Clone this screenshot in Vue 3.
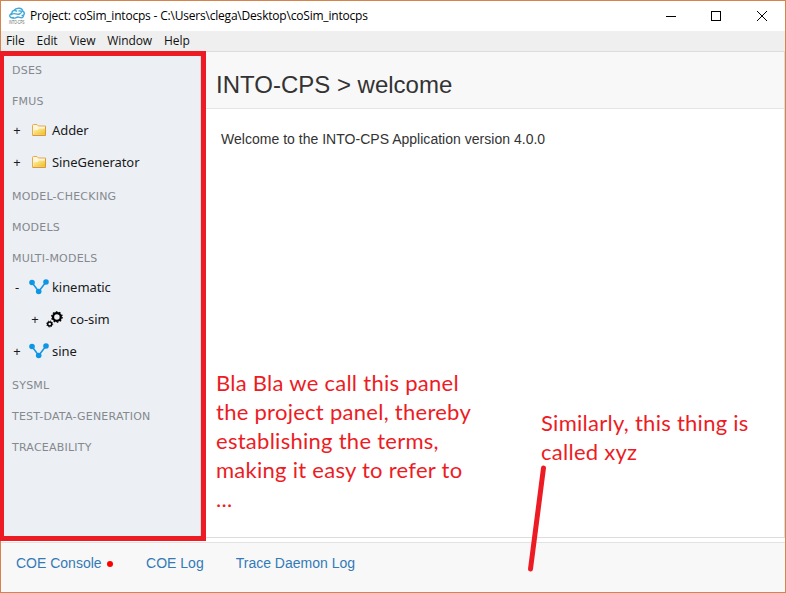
<script setup>
const menus = ['File', 'Edit', 'View', 'Window', 'Help']
const rows = [
  { label: 'DSES', kind: 'heading' },
  { label: 'FMUS', kind: 'heading' },
  { label: 'Adder', kind: 'item', icon: 'folder', sign: '+' },
  { label: 'SineGenerator', kind: 'item', icon: 'folder', sign: '+' },
  { label: 'MODEL-CHECKING', kind: 'heading' },
  { label: 'MODELS', kind: 'heading' },
  { label: 'MULTI-MODELS', kind: 'heading' },
  { label: 'kinematic', kind: 'item', icon: 'graph', sign: '-' },
  { label: 'co-sim', kind: 'item', icon: 'gears', sign: '+', nested: true },
  { label: 'sine', kind: 'item', icon: 'graph', sign: '+' },
  { label: 'SYSML', kind: 'heading' },
  { label: 'TEST-DATA-GENERATION', kind: 'heading' },
  { label: 'TRACEABILITY', kind: 'heading' },
]
</script>

<template>
  <div class="app-window">
    <header class="titlebar">
      <svg class="logo" width="18" height="20" viewBox="0 0 18 20">
        <g fill="none" stroke="#45a9d8" stroke-width="1.4">
          <path d="M6 11.500C1 13 .5 8 4 7.500C3.500 4.500 7 3.500 9 5.500" />
          <path d="M6 4.500C8 1.400 14.500 1.600 14.500 5C17.500 6.500 16.500 10 13.500 9.500" />
          <path d="M3 9C6 5.500 8.500 9.500 11.500 8S14 4.500 10.500 5" />
          <path d="M4.500 12C8.500 13 8 10 11.500 11.300S15.500 10.500 15.500 9" />
        </g>
        <text x="1" y="17.500" font-size="4.500" textLength="15.500" lengthAdjust="spacingAndGlyphs" fill="#666">INTO-CPS</text>
      </svg>
      <span class="title">Project: coSim_intocps - C:\Users\clega\Desktop\coSim_intocps</span>
      <svg class="controls" width="104" height="12" viewBox="0 0 104 12" fill="none" stroke="#000">
        <path d="M1 6.500H11" />
        <rect x="46.500" y="1.500" width="9" height="9" />
        <path d="M92 1L102 11M102 1L92 11" />
      </svg>
    </header>
    <nav class="menubar">
      <span v-for="m in menus" :key="m">{{ m }}</span>
    </nav>

    <div class="body">
      <aside class="sidebar">
        <div v-for="r in rows" :key="r.label" :class="[r.kind, { nested: r.nested }]">
          <template v-if="r.kind === 'item'">
            <span class="sign">{{ r.sign }}</span>
            <span class="icon" :class="r.icon">
              <svg v-if="r.icon === 'folder'" width="14" height="12" viewBox="0 0 14 12">
                <defs>
                  <linearGradient id="fold" x1="0" y1="0" x2="1" y2="1">
                    <stop offset="0" stop-color="#fff3a8" />
                    <stop offset="1" stop-color="#edbd29" />
                  </linearGradient>
                </defs>
                <path d="M.5 11V1.500Q.5.500 1.500.500H5L6.500 2H13.500V11Z" fill="#fff5d8" stroke="#e5a951" />
                <path d="M1.500 10.500V6H5.500L7 4.500H13V10.500Z" fill="url(#fold)" />
                <path d="M.5 11.500H13.500V2.500" fill="none" stroke="#dc9632" />
              </svg>
              <svg v-else-if="r.icon === 'graph'" width="20" height="16" viewBox="0 0 20 16">
                <path d="M3 3.500L9.700 12.500L17 3" fill="none" stroke="#1296e0" stroke-width="1.500" />
                <g fill="#0d96e3">
                  <circle cx="3" cy="3.500" r="2.800" />
                  <circle cx="9.700" cy="12.500" r="2.800" />
                  <circle cx="17" cy="3" r="2.800" />
                </g>
              </svg>
              <svg v-else width="17" height="17" viewBox="0 0 17 17" fill="none" stroke="#000">
                <circle cx="10.900" cy="6" r="3.900" stroke-width="2.300" />
                <circle cx="10.900" cy="6" r="5.200" stroke-width="1.300" stroke-dasharray="1.630 1.630" />
                <circle cx="3.700" cy="13" r="2" stroke-width="1.500" />
                <circle cx="3.700" cy="13" r="3" stroke-width="1" stroke-dasharray="1.180 1.180" />
              </svg>
            </span>
          </template>
          <span class="label">{{ r.label }}</span>
        </div>
      </aside>
      <main class="main">
        <h1 class="heading-bar">INTO-CPS &gt; welcome</h1>
        <p class="welcome">Welcome to the INTO-CPS Application version 4.0.0</p>
      </main>
    </div>

    <footer class="footer">
      <span>COE Console</span>
      <i class="dot"></i>
      <span>COE Log</span>
      <span class="trace">Trace Daemon Log</span>
    </footer>

    <p class="note panel-note">Bla Bla we call this panel<br />the project panel, thereby<br />establishing the terms,<br />making it easy to refer to<br />...</p>
    <p class="note thing-note">Similarly, this thing is<br />called xyz</p>
    <svg class="pointer" width="24" height="110" viewBox="0 0 24 110">
      <path d="M18.500 3L5.500 104" stroke="#ed1c24" stroke-width="5" stroke-linecap="round" />
    </svg>
  </div>
</template>

<style>
body { margin: 0; }
</style>

<style scoped>
.app-window {
  position: relative;
  box-sizing: border-box;
  width: 786px;
  height: 593px;
  border: 1px solid #d6844c;
  background: #fff;
  display: flex;
  flex-direction: column;
  font-family: "Liberation Sans", Arial, sans-serif;
}
.titlebar {
  height: 30px;
  flex: none;
  display: flex;
  align-items: center;
  padding: 0 16px 0 7px;
}
.logo { flex: none; overflow: visible; }
.title {
  margin-left: 4px;
  font: 12px/30px "Open Sans", sans-serif;
  letter-spacing: -0.2px;
  color: #000;
  white-space: nowrap;
}
.controls { margin-left: auto; margin-top: -1px; }
.menubar {
  height: 20px;
  flex: none;
  background: #efefef;
  border-bottom: 1px solid #dcdcdc;
  display: flex;
  gap: 12px;
  padding-left: 5px;
  font: 12px/20px "Open Sans", sans-serif;
  letter-spacing: -0.1px;
  color: #111;
}
.body { display: flex; height: 490px; flex: none; margin: 0 0 0 -1px; }
.sidebar {
  box-sizing: border-box;
  width: 206px;
  flex: none;
  margin-top: -1px;
  border: 5px solid #ed1c24;
  border-left-width: 4px;
  background: #ecf0f5;
  box-shadow: inset -1px 0 #d8dae0;
  height: 490px;
  position: relative;
}
.heading {
  height: 31px;
  padding-left: 8px;
  font: 11px/33px "DejaVu Sans", Verdana, sans-serif;
  letter-spacing: 0.22px;
  color: #85888d;
}
.sidebar > :first-child { margin-top: -2px; }
.item {
  height: 32px;
  display: flex;
  align-items: center;
  padding: 0 0 4px 8px;
  box-sizing: border-box;
  font: 13px/28px "Noto Sans", sans-serif;
  letter-spacing: -0.07px;
  color: #1a1a1a;
}
.nested { padding-left: 26px; }
.sign { width: 10px; text-align: center; }
.icon { width: 30px; box-sizing: border-box; display: flex; align-items: center; }
.folder { padding-left: 10px; }
.graph { padding-left: 7px; }
.nested .icon { padding-left: 6px; }
.main {
  flex: 1;
  height: 485px;
  border-right: 1px solid #dcdcdc;
  border-bottom: 1px solid #dcdcdc;
}
.heading-bar {
  margin: 0;
  height: 56px;
  padding-left: 10px;
  background: #f8f8f8;
  border-bottom: 1px solid #e5e5e5;
  font-size: 24px;
  font-weight: 400;
  line-height: 66px;
  color: #333;
}
.welcome {
  margin: 20px 0 0 15px;
  font-size: 14px;
  line-height: 20px;
  letter-spacing: 0.02px;
  color: #333;
}
.footer {
  flex: 1;
  border-top: 1px solid #e2e2e2;
  background: #f8f8f8;
  display: flex;
  padding-left: 15px;
  font-size: 14px;
  line-height: 40px;
  color: #337ab7;
}
.dot { width: 6px; height: 6px; border-radius: 50%; background: #f00; margin: 18px 33.5px 0 5px; }
.trace { margin-left: 32px; }
.note {
  position: absolute;
  margin: 0;
  font: 22px/29px Lato, sans-serif;
  letter-spacing: 0.27px;
  color: #ed1c24;
  white-space: nowrap;
}
.panel-note { left: 215px; top: 367px; }
.thing-note { left: 540px; top: 407px; }
.pointer { position: absolute; left: 524px; top: 464px; }
</style>
